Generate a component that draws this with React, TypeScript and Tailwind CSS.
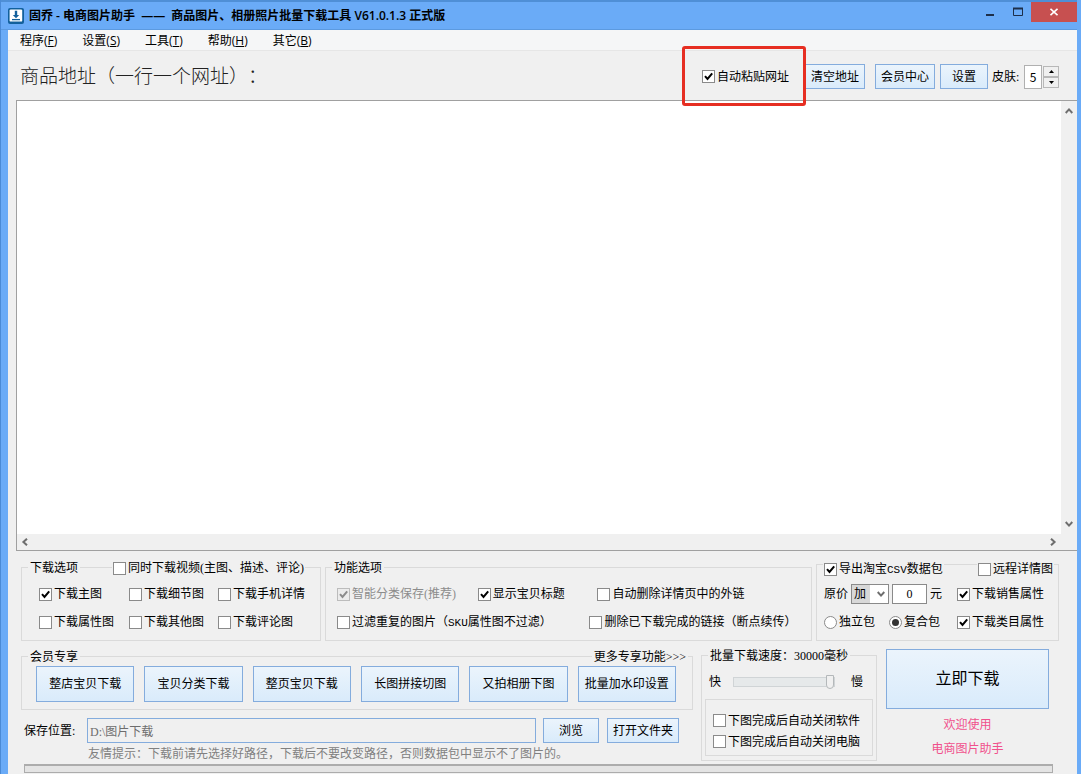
import React from "react";

const MENU = [
    { label: "程序", key: "F" },
    { label: "设置", key: "S" },
    { label: "工具", key: "T" },
    { label: "帮助", key: "H" },
    { label: "其它", key: "B" },
];

const MEMBER_TOOLS = ["整店宝贝下载", "宝贝分类下载", "整页宝贝下载", "长图拼接切图", "又拍相册下图", "批量加水印设置"];

type CheckProps = { label: React.ReactNode; checked?: boolean; disabled?: boolean };

function Check({ label, checked, disabled }: CheckProps) {
    return (
        <label className={`flex items-center gap-0.5 whitespace-nowrap ${disabled ? "text-[#8c8c8c]" : ""}`}>
            <span className="relative block size-[13px] shrink-0">
                <input
                    type="checkbox"
                    defaultChecked={checked}
                    disabled={disabled}
                    className="peer block size-[13px] appearance-none border border-[#8a8a8a] bg-white disabled:border-[#bcbcbc] disabled:bg-[#ececec]"
                />
                <svg viewBox="0 0 13 13" className="pointer-events-none absolute inset-0 hidden size-[13px] peer-checked:block" fill="none" stroke="currentColor" strokeWidth="2">
                    <path d="M3 6.2 L5.5 9 L10.2 3.4" />
                </svg>
            </span>
            <span>{label}</span>
        </label>
    );
}

function Radio({ label, checked }: CheckProps) {
    return (
        <label className="flex items-center gap-0.5 whitespace-nowrap">
            <span className="relative block size-[13px] shrink-0">
                <input type="radio" name="package" defaultChecked={checked} className="peer block size-[13px] appearance-none rounded-full border border-[#8a8a8a] bg-white" />
                <span className="pointer-events-none absolute inset-[3px] hidden rounded-full bg-[#333] peer-checked:block" />
            </span>
            <span>{label}</span>
        </label>
    );
}

function Btn({ children, className = "" }: { children: React.ReactNode; className?: string }) {
    return (
        <button type="button" className={`border border-[#84acdd] bg-linear-to-b from-[#ebf4fc] to-[#d9ebfb] whitespace-nowrap ${className}`}>
            {children}
        </button>
    );
}

// half-width latin, about as wide as half a Chinese character
function Half({ children }: { children: React.ReactNode }) {
    return <span className="font-['Liberation_Mono',monospace] text-[11px]">{children}</span>;
}

function Chevron({ turn = "" }: { turn?: string }) {
    return (
        <svg viewBox="0 0 8 8" className={`size-2 ${turn}`} fill="none" stroke="#6e6e6e" strokeWidth="2">
            <path d="M0.7 6 L4 2.4 L7.3 6" />
        </svg>
    );
}

function TitleBar() {
    return (
        <header className="flex h-[30px] items-center border-t-2 border-b border-t-[#4f8fd6] border-b-[#5c9ae0] pl-[7px]">
            <svg viewBox="0 0 16 16" className="size-4">
                <rect width="16" height="16" rx="2" fill="#12609c" />
                <rect x="1.6" y="1.4" width="12.6" height="12.2" rx="1.2" fill="#fff" />
                <path d="M6.8 2.8 H9.2 V7 H11.2 L8 10.2 L4.8 7 H6.8 Z" fill="#12609c" />
                <path d="M4 11.6 H12" stroke="#12609c" strokeWidth="1.3" />
            </svg>
            <h1 className="ml-[5px] flex-1 whitespace-nowrap font-['Open_Sans','Noto_Sans_CJK_SC',sans-serif] text-xs font-semibold">
                固乔 - 电商图片助手 <span className="mx-[3px]">——</span> 商品图片、相册照片批量下载工具 V61.0.1.3 正式版
            </h1>
            <div className="flex self-start">
                <button type="button" aria-label="最小化" className="flex h-5 w-7 items-center justify-center">
                    <svg viewBox="0 0 10 10" className="size-2.5"><path d="M1 8 H9" stroke="#1d2f4a" strokeWidth="2" /></svg>
                </button>
                <button type="button" aria-label="最大化" className="flex h-5 w-[27px] items-center justify-center">
                    <svg viewBox="0 0 10 10" className="size-2.5"><path d="M0.5 1 V8.5 H9.5 V1" fill="none" stroke="#1d2f4a" /><path d="M0 1.5 H10" stroke="#1d2f4a" strokeWidth="2" /></svg>
                </button>
                <button type="button" aria-label="关闭" className="flex h-5 w-[46px] items-center justify-center bg-[#c75050]">
                    <svg viewBox="0 0 8 8" className="size-2"><path d="M0.5 0.8 L7.5 7.2 M7.5 0.8 L0.5 7.2" stroke="#fff" strokeWidth="1.6" /></svg>
                </button>
            </div>
        </header>
    );
}

function AddressBar() {
    return (
        <div className="flex h-[49px] items-center pt-0.5 pr-[18px] pl-3">
            <label htmlFor="urls" className="mr-auto text-[19px] font-light whitespace-nowrap text-[#222] [text-spacing-trim:space-all]">
                商品地址（一行一个网址）：
            </label>
            <div className="relative mr-4">
                <Check label="自动粘贴网址" checked />
                {/* highlight frame around the auto paste option */}
                <div className="pointer-events-none absolute -top-[23px] -right-[17px] -bottom-[21px] -left-5 z-10 rounded-[3px] border-3 border-[#e62e22]" />
            </div>
            <Btn className="h-[25px] w-[60px]">清空地址</Btn>
            <Btn className="ml-2.5 h-[25px] w-[60px]">会员中心</Btn>
            <Btn className="ml-[5px] h-[25px] w-12">设置</Btn>
            <label htmlFor="skin" className="ml-1 w-8 whitespace-nowrap">皮肤:</label>
            <input id="skin" defaultValue="5" className="h-6 w-[18px] border border-[#b0b0b0] bg-white text-center font-['Noto_Sans_CJK_SC',sans-serif]" />
            <div className="ml-px flex flex-col">
                <button type="button" aria-label="增加" className="flex h-[11px] w-4 items-center justify-center border border-[#b8b8b8]">
                    <svg viewBox="0 0 5 3" className="h-[3px] w-[5px]"><path d="M0 3 L2.5 0 L5 3 Z" /></svg>
                </button>
                <button type="button" aria-label="减少" className="flex h-[11px] w-4 items-center justify-center border border-[#b8b8b8]">
                    <svg viewBox="0 0 5 3" className="h-[3px] w-[5px]"><path d="M0 0 L2.5 3 L5 0 Z" /></svg>
                </button>
            </div>
        </div>
    );
}

function UrlBox() {
    return (
        <div className="ml-2 grid min-h-40 flex-1 grid-cols-[1fr_16px] grid-rows-[1fr_16px] border border-r-0 border-[#a0a0a0]">
            <textarea id="urls" className="resize-none overflow-hidden bg-white p-1 outline-none" />
            <div className="flex flex-col items-center justify-between py-1.5">
                <button type="button" aria-label="向上滚动"><Chevron /></button>
                <button type="button" aria-label="向下滚动"><Chevron turn="rotate-180" /></button>
            </div>
            <div className="flex items-center justify-between px-1">
                <button type="button" aria-label="向左滚动"><Chevron turn="-rotate-90" /></button>
                <button type="button" aria-label="向右滚动"><Chevron turn="rotate-90" /></button>
            </div>
        </div>
    );
}

function DownloadOptions() {
    return (
        <fieldset className="relative min-w-0 border border-[#dadada] pt-4 pb-2 pl-[17px]">
            <legend className="absolute -top-2 left-1.5 bg-[#f0f0f0] px-0.5">下载选项</legend>
            <div className="absolute -top-2 left-[90px] bg-[#f0f0f0] px-px">
                <Check label="同时下载视频(主图、描述、评论)" />
            </div>
            <div className="grid auto-rows-[20px] grid-cols-[90fr_89fr_102fr] gap-y-2">
                <Check label="下载主图" checked />
                <Check label="下载细节图" />
                <Check label="下载手机详情" />
                <Check label="下载属性图" />
                <Check label="下载其他图" />
                <Check label="下载评论图" />
            </div>
        </fieldset>
    );
}

function FeatureOptions() {
    return (
        <fieldset className="relative min-w-0 border border-[#dadada] pt-4 pb-2 pl-[11px]">
            <legend className="absolute -top-2 left-1.5 bg-[#f0f0f0] px-0.5">功能选项</legend>
            <div className="grid h-5 grid-cols-[141fr_120fr_214fr]">
                <Check label="智能分类保存(推荐)" checked disabled />
                <Check label="显示宝贝标题" checked />
                <Check label="自动删除详情页中的外链" />
            </div>
            <div className="mt-2 grid h-5 grid-cols-[253fr_222fr]">
                <Check label={<>过滤重复的图片（<Half>SKU</Half>属性图不过滤）</>} />
                <Check label="删除已下载完成的链接（断点续传）" />
            </div>
        </fieldset>
    );
}

function CsvOptions() {
    return (
        <fieldset className="relative min-w-0 border border-[#dadada] pt-[19px] pb-2 pl-[7px]">
            <legend className="absolute -top-1 left-1.5 bg-[#f0f0f0] px-px">
                <Check label={<>导出淘宝<Half>CSV</Half>数据包</>} checked />
            </legend>
            <div className="absolute -top-1 right-1 bg-[#f0f0f0] px-px">
                <Check label="远程详情图" />
            </div>
            <div className="grid auto-rows-[20px] grid-cols-[133fr_101fr] gap-y-2">
                <div className="flex items-center gap-[3px]">
                    <label htmlFor="op" className="shrink-0">原价</label>
                    <span className="relative block h-5 w-[38px] shrink-0">
                        <select id="op" className="h-5 w-full appearance-none border border-[#8a8a8a] bg-linear-to-r from-[#d8d8d8] from-50% to-white to-50% pl-0.5">
                            <option>加</option>
                            <option>减</option>
                        </select>
                        <span className="pointer-events-none absolute top-1.5 right-1"><Chevron turn="rotate-180" /></span>
                    </span>
                    <input aria-label="金额" defaultValue="0" className="h-5 w-[35px] shrink-0 border border-[#8a8a8a] bg-white text-center" />
                    <span>元</span>
                </div>
                <Check label="下载销售属性" checked />
                <div className="flex items-center gap-3.5">
                    <Radio label="独立包" />
                    <Radio label="复合包" checked />
                </div>
                <Check label="下载类目属性" checked />
            </div>
        </fieldset>
    );
}

function MemberTools() {
    return (
        <fieldset className="relative mt-[7px] min-w-0 border border-[#dadada] pt-[9px] pr-4 pb-[7px] pl-3.5">
            <legend className="absolute -top-2 left-1.5 bg-[#f0f0f0] px-0.5">会员专享</legend>
            <a href="#" className="absolute -top-2 right-1 bg-[#f0f0f0] px-0.5">更多专享功能&gt;&gt;&gt;</a>
            <div className="grid grid-cols-6 gap-2.5">
                {MEMBER_TOOLS.map((name) => (
                    <Btn key={name} className="h-9">{name}</Btn>
                ))}
            </div>
        </fieldset>
    );
}

function SpeedBox() {
    return (
        <fieldset className="relative mt-1.5 mb-auto min-w-0 border border-[#dadada] px-[3px] pt-4 pb-1">
            <legend className="absolute -top-2 left-1.5 bg-[#f0f0f0] px-0.5 whitespace-nowrap">批量下载速度：30000毫秒</legend>
            <div className="flex h-5 items-center pr-2.5 pl-1">
                <label htmlFor="speed" className="shrink-0">快</label>
                <input
                    id="speed"
                    type="range"
                    defaultValue={100}
                    className="mr-4 ml-3 h-2.5 min-w-0 flex-1 appearance-none border border-[#d0d4d6] bg-[#e6e9ea] [&::-webkit-slider-thumb]:h-3.5 [&::-webkit-slider-thumb]:w-2 [&::-webkit-slider-thumb]:appearance-none [&::-webkit-slider-thumb]:rounded-b-[4px] [&::-webkit-slider-thumb]:border [&::-webkit-slider-thumb]:border-[#b4b8ba] [&::-webkit-slider-thumb]:bg-[#f0f0f0]"
                />
                <span className="shrink-0">慢</span>
            </div>
            <div className="mt-[7px] grid auto-rows-[21px] border border-[#dadada] pt-2.5 pb-[3px] pl-[7px]">
                <Check label="下图完成后自动关闭软件" />
                <Check label="下图完成后自动关闭电脑" />
            </div>
        </fieldset>
    );
}

export default function App() {
    return (
        <div className="flex min-h-screen flex-col border-l border-[#4a8ad6] bg-[#6aabf7] font-['Liberation_Serif','Noto_Sans_CJK_SC',sans-serif] text-xs text-black">
            <div className="mr-1 flex flex-1 flex-col">
                <TitleBar />
                <main className="ml-[7px] flex flex-1 flex-col bg-[#f0f0f0]">
                    <nav className="flex h-[21px] items-center gap-[25px] border-b border-[#e6e6e6] bg-[#f5f6f7] pt-0.5 pl-3 font-['Open_Sans','Noto_Sans_CJK_SC',sans-serif]">
                        {MENU.map((m) => (
                            <button key={m.key} type="button">
                                {m.label}(<u>{m.key}</u>)
                            </button>
                        ))}
                    </nav>
                    <AddressBar />
                    <UrlBox />

                    <div className="pt-[13px] pr-[18px] pb-px pl-[13px]">
                        <div className="grid grid-cols-[300fr_487fr_243fr] items-end gap-1">
                            <DownloadOptions />
                            <FeatureOptions />
                            <CsvOptions />
                        </div>

                        <div className="mt-2 grid grid-cols-[672fr_176fr_174fr] gap-2">
                            <div className="min-w-0">
                                <MemberTools />
                                <div className="mt-2 flex h-[25px] items-center pr-3.5 pl-[3px]">
                                    <label htmlFor="path" className="w-[63px] shrink-0">保存位置:</label>
                                    <input id="path" readOnly defaultValue="D:\图片下载" className="h-full min-w-0 flex-1 border border-[#84acdd] bg-[#f0f0f0] px-0.5 text-[#6d6d6d] outline-none" />
                                    <Btn className="ml-[7px] h-full w-14">浏览</Btn>
                                    <Btn className="ml-2 h-full w-[72px]">打开文件夹</Btn>
                                </div>
                                <p className="mt-[3px] mb-0.5 pl-[67px] whitespace-nowrap text-[#808080]">
                                    友情提示：下载前请先选择好路径，下载后不要改变路径，否则数据包中显示不了图片的。
                                </p>
                            </div>
                            <SpeedBox />
                            <div className="flex flex-col pr-2.5 pl-px text-center text-[#f0508c]">
                                <Btn className="h-[60px] text-base text-black">立即下载</Btn>
                                <p className="mt-2">欢迎使用</p>
                                <p className="mt-2">电商图片助手</p>
                            </div>
                        </div>

                        <div role="progressbar" aria-label="下载进度" className="mr-1.5 ml-[3px] h-[9px] border border-t-2 border-[#acacac] bg-[#e4e4e4]" />
                    </div>
                </main>
            </div>
        </div>
    );
}
